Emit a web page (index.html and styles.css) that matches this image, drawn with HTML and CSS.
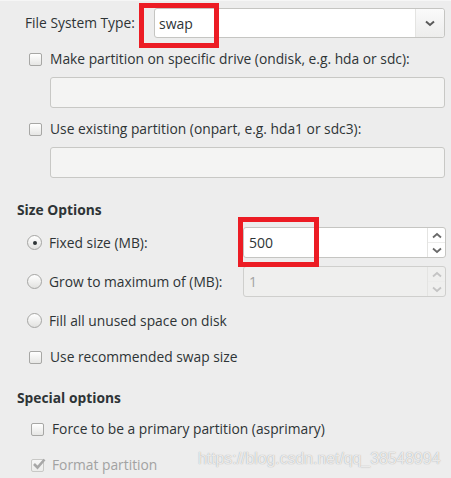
FILE: index.html
```html
<!DOCTYPE html>
<html>
<head>
<meta charset="utf-8">
<link rel="stylesheet" href="styles.css">
</head>
<body>
<div class="page">
  <div class="row fs-row">
    <span class="label fs-label">File System Type:</span>
    <div class="combo">
      <span class="combo-text">swap</span>
      <span class="combo-btn">
        <svg width="10" height="7" viewBox="0 0 10 7"><path d="M1 1.5 L5 5 L9 1.5" fill="none" stroke="#5a5a5a" stroke-width="2"/></svg>
      </span>
    </div>
  </div>

  <div class="row check-row r-ondisk">
    <span class="check"></span>
    <span class="label">Make partition on specific drive (ondisk, e.g. hda or sdc):</span>
  </div>
  <div class="entry e-ondisk"></div>

  <div class="row check-row r-onpart">
    <span class="check"></span>
    <span class="label">Use existing partition (onpart, e.g. hda1 or sdc3):</span>
  </div>
  <div class="entry e-onpart"></div>

  <div class="heading h-size">Size Options</div>

  <div class="row radio-row r-fixed">
    <div class="radio-label"><span class="radio checked"></span><span class="label">Fixed size (MB):</span></div>
    <div class="spin">
      <span class="spin-text">500</span>
      <span class="spin-btns">
        <span class="sb"><svg width="10" height="7" viewBox="0 0 10 7"><path d="M1 5.5 L5 2 L9 5.5" fill="none" stroke="#6a6a6a" stroke-width="1.8"/></svg></span>
        <span class="sb"><svg width="10" height="7" viewBox="0 0 10 7"><path d="M1 1.5 L5 5 L9 1.5" fill="none" stroke="#6a6a6a" stroke-width="1.8"/></svg></span>
      </span>
    </div>
  </div>

  <div class="row radio-row r-grow">
    <div class="radio-label"><span class="radio"></span><span class="label">Grow to maximum of (MB):</span></div>
    <div class="spin disabled">
      <span class="spin-text">1</span>
      <span class="spin-btns">
        <span class="sb"><svg width="10" height="7" viewBox="0 0 10 7"><path d="M1 5.5 L5 2 L9 5.5" fill="none" stroke="#c4c4c4" stroke-width="1.8"/></svg></span>
        <span class="sb"><svg width="10" height="7" viewBox="0 0 10 7"><path d="M1 1.5 L5 5 L9 1.5" fill="none" stroke="#c4c4c4" stroke-width="1.8"/></svg></span>
      </span>
    </div>
  </div>

  <div class="row radio-row r-fill">
    <div class="radio-label"><span class="radio"></span><span class="label">Fill all unused space on disk</span></div>
  </div>

  <div class="row check-row r-rec">
    <span class="check"></span>
    <span class="label">Use recommended swap size</span>
  </div>

  <div class="heading h-special">Special options</div>

  <div class="row check-row r-force">
    <span class="check"></span>
    <span class="label">Force to be a primary partition (asprimary)</span>
  </div>

  <div class="row check-row r-format">
    <span class="check checked-dis">
      <svg width="14" height="12" viewBox="0 0 14 12"><path d="M2 6 L5.5 9.5 L12.5 1.5" fill="none" stroke="#a8a8a8" stroke-width="2.6"/></svg>
    </span>
    <span class="label dim">Format partition</span>
  </div>

  <div class="mark mark-fs"></div>
  <div class="mark mark-size"></div>
  <div class="watermark">https://blog.csdn.net/qq_38548994</div>
</div>
</body>
</html>
```
FILE: styles.css
```css
html, body {
  margin: 0;
  padding: 0;
  background: #ededed;
}
.page {
  position: relative;
  width: 451px;
  height: 478px;
  overflow: hidden;
  padding-top: 8px;
  box-sizing: border-box;
  font-family: "Open Sans", "Noto Sans", sans-serif;
  font-size: 13.8px;
  color: #2e3436;
  border-top: 1px solid #f6f6f6;
}
.row {
  display: flex;
  align-items: center;
}
.label {
  white-space: nowrap;
  line-height: 20px;
}
.fs-row {
  height: 30px;
  margin-top: -1px;
}
.fs-label {
  margin-left: 25px;
  width: 129px;
}
.combo {
  width: 291px;
  height: 30px;
  box-sizing: border-box;
  border: 1px solid #c5c5c2;
  border-radius: 3px;
  background: #fff;
  display: flex;
  align-items: center;
}
.combo-text {
  flex: 1;
  padding-left: 4px;
  font-size: 14px;
  color: #2e3436;
}
.combo-btn {
  width: 28px;
  height: 100%;
  border-left: 1px solid #e4e4e2;
  background: linear-gradient(#fafafa, #ededec);
  border-radius: 0 3px 3px 0;
  display: flex;
  align-items: center;
  justify-content: center;
}
.check-row {
  height: 20px;
  padding-left: 29px;
}
.check {
  width: 11px;
  height: 11px;
  border: 1px solid #a7a7a5;
  border-radius: 2px;
  background: linear-gradient(#ffffff, #e6e6e4);
  margin-right: 8px;
  flex: none;
  position: relative;
}
.check.checked-dis {
  border-color: #c8c8c6;
  background: linear-gradient(#f7f7f7, #ececeb);
}
.check.checked-dis svg {
  position: absolute;
  left: 0;
  top: -2px;
}
.r-ondisk { margin-top: 11px; }
.r-onpart { margin-top: 11px; }
.entry {
  margin-left: 50px;
  width: 395px;
  height: 31px;
  box-sizing: border-box;
  border: 1px solid #c8c8c5;
  border-radius: 3px;
  background: #f4f4f3;
  margin-top: 8px;
}
.heading {
  font-weight: bold;
  margin-left: 17px;
  height: 20px;
  line-height: 20px;
  color: #2e3436;
}
.h-size { margin-top: 22px; }
.h-special { margin-top: 21px; }
.radio-row {
  height: 31px;
  padding-left: 27px;
}
.radio-label {
  display: flex;
  align-items: center;
  width: 216px;
}
.radio {
  width: 13px;
  height: 13px;
  border: 1px solid #a5a5a3;
  border-radius: 50%;
  background: linear-gradient(#ffffff, #e2e2e0);
  margin-right: 7px;
  flex: none;
  position: relative;
}
.radio.checked::after {
  content: "";
  position: absolute;
  left: 4.5px;
  top: 4.5px;
  width: 4px;
  height: 4px;
  border-radius: 50%;
  background: #2e3436;
}
.r-fixed { margin-top: 7px; }
.r-grow { margin-top: 8px; }
.r-fill { margin-top: 8px; height: 31px; }
.r-rec { margin-top: 11px; }
.r-force { margin-top: 11px; padding-left: 31px; }
.r-format { margin-top: 16px; padding-left: 31px; }
.spin {
  width: 203px;
  height: 31px;
  box-sizing: border-box;
  border: 1px solid #c5c5c2;
  border-radius: 3px;
  background: #fff;
  display: flex;
}
.spin.disabled {
  background: #efefee;
  border-color: #cfcfcd;
}
.spin-text {
  flex: 1;
  padding-left: 5px;
  line-height: 29px;
  font-size: 14px;
}
.spin.disabled .spin-text { color: #a3a3a3; }
.spin-btns {
  width: 17px;
  border-left: 1px solid #e4e4e2;
  display: flex;
  flex-direction: column;
}
.sb {
  flex: 1;
  display: flex;
  align-items: center;
  justify-content: center;
}
.sb + .sb { border-top: 1px solid #ececeb; }
.dim { color: #a2a2a2; }
.mark {
  position: absolute;
  border: 5px solid #ec1c24;
  box-sizing: border-box;
}
.mark-fs {
  left: 139px;
  top: 2px;
  width: 80px;
  height: 45px;
}
.mark-size {
  left: 238px;
  top: 216px;
  width: 81px;
  height: 50px;
}
.watermark {
  position: absolute;
  left: 198px;
  top: 449px;
  font-family: "Liberation Sans", Arial, sans-serif;
  font-size: 15.8px;
  color: rgba(255,255,255,0.8);
  text-shadow: 0 0 1px rgba(110,110,110,0.7);
  white-space: nowrap;
}
```
